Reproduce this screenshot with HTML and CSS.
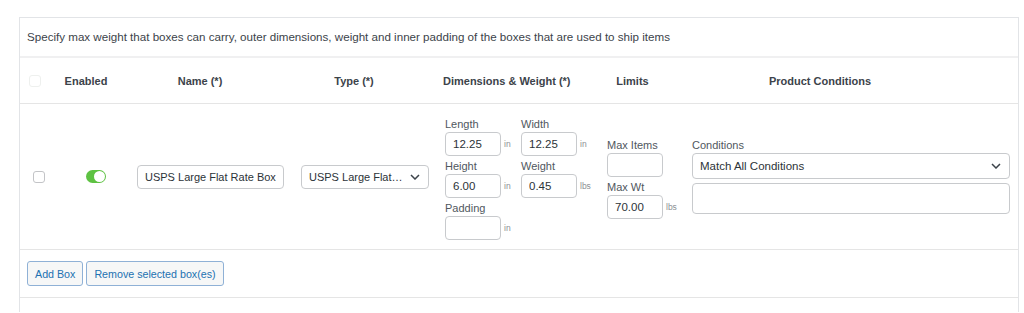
FILE: index.html
```html
<!DOCTYPE html>
<html lang="en">
<head>
  <meta charset="UTF-8" />
  <meta name="viewport" content="width=device-width, initial-scale=1.0"/>
  <title>Shipping Boxes</title>
  <link rel="stylesheet" href="styles.css">
</head>
<body>
  <div class="boxes-panel">
    <p class="panel-desc">Specify max weight that boxes can carry, outer dimensions, weight and inner padding of the boxes that are used to ship items</p>

    <table class="boxes-table">
      <colgroup>
        <col class="w-check">
        <col class="w-enabled">
        <col class="w-name">
        <col class="w-type">
        <col class="w-dims">
        <col class="w-limits">
        <col>
      </colgroup>
      <thead>
        <tr>
          <th class="th-check"><input type="checkbox" class="check check-faint" /></th>
          <th class="th-enabled">Enabled</th>
          <th class="th-name">Name (*)</th>
          <th class="th-type">Type (*)</th>
          <th class="th-dims">Dimensions &amp; Weight (*)</th>
          <th class="th-limits">Limits</th>
          <th class="th-cond">Product Conditions</th>
        </tr>
      </thead>
      <tbody>
        <tr>
          <td class="td-check"><input type="checkbox" class="check" /></td>
          <td class="td-enabled"><span class="toggle"><span class="knob"></span></span></td>
          <td class="td-name"><input type="text" class="field name-field" value="USPS Large Flat Rate Box" /></td>
          <td class="td-type">
            <div class="select-wrap type-select">
              <select class="field">
                <option>USPS Large Flat Rate Box</option>
              </select>
              <svg class="chevron" width="10" height="6" viewBox="0 0 10 6"><path d="M1 1l4 4 4-4" fill="none" stroke="#3c434a" stroke-width="1.5"/></svg>
            </div>
          </td>
          <td class="td-dims">
            <div class="dims-grid">
              <div class="dim">
                <label>Length</label>
                <div class="dim-row"><input type="text" class="field small-field" value="12.25" /><span class="unit">in</span></div>
              </div>
              <div class="dim">
                <label>Width</label>
                <div class="dim-row"><input type="text" class="field small-field" value="12.25" /><span class="unit">in</span></div>
              </div>
              <div class="dim">
                <label>Height</label>
                <div class="dim-row"><input type="text" class="field small-field" value="6.00" /><span class="unit">in</span></div>
              </div>
              <div class="dim">
                <label>Weight</label>
                <div class="dim-row"><input type="text" class="field small-field" value="0.45" /><span class="unit">lbs</span></div>
              </div>
              <div class="dim">
                <label>Padding</label>
                <div class="dim-row"><input type="text" class="field small-field" value="" /><span class="unit">in</span></div>
              </div>
            </div>
          </td>
          <td class="td-limits">
            <div class="dim">
              <label>Max Items</label>
              <div class="dim-row"><input type="text" class="field small-field" value="" /></div>
            </div>
            <div class="dim">
              <label>Max Wt</label>
              <div class="dim-row"><input type="text" class="field small-field" value="70.00" /><span class="unit">lbs</span></div>
            </div>
          </td>
          <td class="td-cond">
            <div class="cond-box">
              <label class="cond-label">Conditions</label>
              <div class="select-wrap cond-select">
                <select class="field">
                  <option>Match All Conditions</option>
                </select>
                <svg class="chevron" width="10" height="6" viewBox="0 0 10 6"><path d="M1 1l4 4 4-4" fill="none" stroke="#3c434a" stroke-width="1.5"/></svg>
              </div>
              <textarea class="field cond-area"></textarea>
            </div>
          </td>
        </tr>
      </tbody>
      <tfoot>
        <tr>
          <td colspan="7" class="td-actions">
            <div class="actions">
              <button class="btn">Add Box</button>
              <button class="btn">Remove selected box(es)</button>
            </div>
          </td>
        </tr>
      </tfoot>
    </table>
    <div class="panel-end"></div>
  </div>
</body>
</html>
```

FILE: styles.css
```css
body {
    font-family: "Liberation Sans", Arial, sans-serif;
    margin: 0;
    padding: 0;
    background-color: #fff;
    color: #3c434a;
    font-size: 11px;
    overflow: hidden;
}

/* Panel */
.boxes-panel {
    margin: 17px 5px 0 19px;
    border: 1px solid #e2e4e7;
    border-bottom: none;
}

.panel-desc {
    margin: 0;
    height: 38px;
    line-height: 38px;
    padding: 0 7px;
    border-bottom: 2px solid #f0f0f1;
    font-size: 11.6px;
    color: #3c434a;
}

.boxes-table {
    width: 100%;
    border-collapse: separate;
    border-spacing: 0;
    table-layout: fixed;
}

.w-check { width: 38px; }
.w-enabled { width: 60px; }
.w-name { width: 174px; }
.w-type { width: 145px; }
.w-dims { width: 161px; }
.w-limits { width: 87px; }

/* Header */
.boxes-table th {
    height: 45px;
    padding: 0;
    border-bottom: 1px solid #e5e5e5;
    font-weight: bold;
    font-size: 11px;
    color: #3c434a;
    text-align: center;
    white-space: nowrap;
}

.th-check { text-align: left !important; padding-left: 9px !important; }
.th-enabled { padding-right: 4px !important; }
.th-name { padding-right: 10px !important; }
.th-type { padding-right: 21px !important; }
.th-dims { text-align: left !important; padding-left: 6px !important; }
.th-limits { padding-right: 18px !important; }
.th-cond { padding-right: 63px !important; }

/* Body */
.boxes-table td {
    padding: 0;
    vertical-align: middle;
    border-bottom: 1px solid #e5e5e5;
}

.boxes-table tbody td {
    height: 145px;
}

.td-check { padding-left: 13px !important; }
.td-enabled { padding-left: 28px !important; }
.td-name { padding-left: 19px !important; }
.td-type { padding-left: 9px !important; }
.td-dims { padding-left: 8px !important; }
.td-limits { padding-left: 9px !important; }
.td-cond { padding: 0 8px 0 7px !important; }

.cond-box {
    padding-bottom: 4px;
}

.check {
    appearance: none;
    -webkit-appearance: none;
    display: block;
    width: 12px;
    height: 12px;
    margin: 0;
    border: 1px solid #c3c4c7;
    border-radius: 3px;
    background: #fff;
}

.check-faint {
    border-color: #eef0ee;
}

.toggle {
    display: block;
    position: relative;
    width: 20px;
    height: 13px;
    border-radius: 7px;
    background: #5ec243;
}

.toggle .knob {
    position: absolute;
    right: 1px;
    top: 1px;
    width: 11px;
    height: 11px;
    border-radius: 50%;
    background: #fff;
}

.field {
    display: block;
    box-sizing: border-box;
    height: 24px;
    margin: 0;
    padding: 0 7px;
    border: 1px solid #c8cacd;
    border-radius: 4px;
    background: #fff;
    font-family: "Liberation Sans", Arial, sans-serif;
    font-size: 11.5px;
    color: #2c3338;
    outline: none;
}

.name-field {
    width: 147px;
    font-size: 11px;
}

.select-wrap {
    position: relative;
}

.select-wrap select {
    appearance: none;
    -webkit-appearance: none;
    width: 100%;
    padding-right: 24px;
    white-space: nowrap;
    overflow: hidden;
    text-overflow: ellipsis;
}

.select-wrap .chevron {
    position: absolute;
    right: 9px;
    top: 50%;
    margin-top: -3px;
    pointer-events: none;
}

.type-select {
    width: 128px;
}

.type-select select {
    font-size: 11px;
}

/* Dimensions & limits */
.dims-grid {
    display: grid;
    grid-template-columns: 76px 76px;
}

.dim label {
    display: block;
    height: 18px;
    line-height: 20px;
    font-size: 11px;
    color: #50575e;
}

.dim-row {
    display: flex;
    align-items: center;
    gap: 3px;
}

.small-field {
    width: 56px;
}

.unit {
    font-size: 8.5px;
    color: #8c8f94;
}

/* Conditions */
.cond-label {
    display: block;
    height: 17px;
    line-height: 18px;
    font-size: 11px;
    color: #50575e;
}

.cond-select select {
    height: 26px;
}

.cond-area {
    width: 100%;
    height: 31px;
    margin-top: 4px;
    resize: none;
}

/* Actions */
.boxes-table tfoot td {
    height: 47px;
    padding-left: 7px;
}

.actions {
    display: flex;
    gap: 3px;
}

.btn {
    height: 25px;
    padding: 0 7px;
    margin: 0;
    border: 1px solid #8fb1d6;
    border-radius: 3px;
    background: #f6f7f7;
    color: #2271b1;
    font-family: "Liberation Sans", Arial, sans-serif;
    font-size: 10.7px;
    cursor: pointer;
}

.panel-end {
    height: 14px;
}
```
